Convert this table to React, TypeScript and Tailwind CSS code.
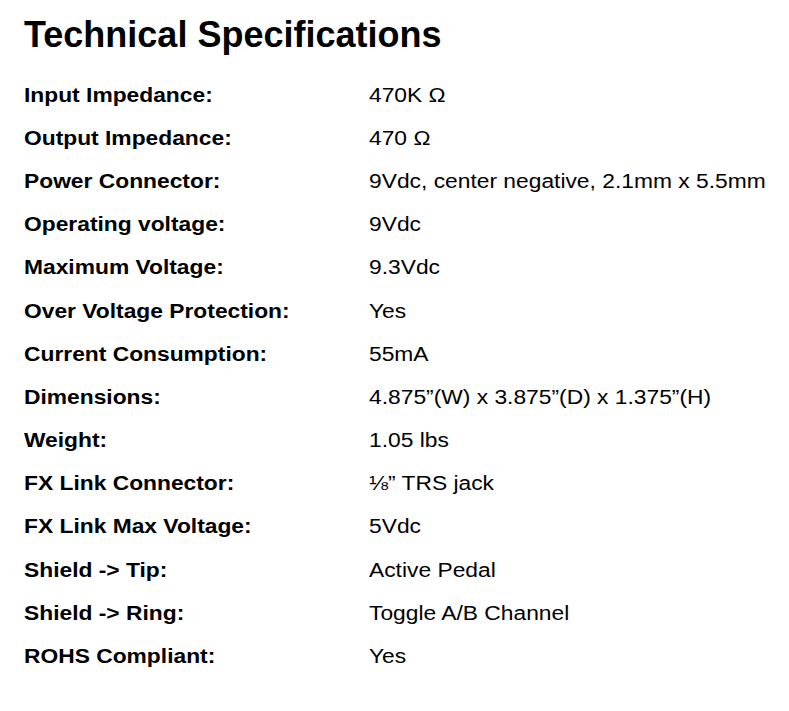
const specs: [string, string][] = [
  ["Input Impedance:", "470K Ω"],
  ["Output Impedance:", "470 Ω"],
  ["Power Connector:", "9Vdc, center negative, 2.1mm x 5.5mm"],
  ["Operating voltage:", "9Vdc"],
  ["Maximum Voltage:", "9.3Vdc"],
  ["Over Voltage Protection:", "Yes"],
  ["Current Consumption:", "55mA"],
  ["Dimensions:", "4.875”(W) x 3.875”(D) x 1.375”(H)"],
  ["Weight:", "1.05 lbs"],
  ["FX Link Connector:", "⅛” TRS jack"],
  ["FX Link Max Voltage:", "5Vdc"],
  ["Shield -> Tip:", "Active Pedal"],
  ["Shield -> Ring:", "Toggle A/B Channel"],
  ["ROHS Compliant:", "Yes"],
];

export default function App() {
  return (
    <div
      className="min-h-screen bg-white px-6 pt-4 text-black"
      style={{ fontFamily: '"Liberation Sans", Arial, sans-serif' }}
    >
      <h1 className="text-[36px] font-bold leading-[38px]">Technical Specifications</h1>
      <div className="mt-[19px] grid grid-cols-[345px_1fr]">
        {specs.map(([label, value]) => (
          <div key={label} className="contents">
            <div className="flex h-[43.2px] items-center text-[20px] font-bold">
              <span className="inline-block origin-left scale-x-[1.14] whitespace-nowrap">{label}</span>
            </div>
            <div className="flex h-[43.2px] items-center text-[20px]">
              <span className="inline-block origin-left scale-x-[1.14] whitespace-nowrap">{value}</span>
            </div>
          </div>
        ))}
      </div>
    </div>
  );
}
